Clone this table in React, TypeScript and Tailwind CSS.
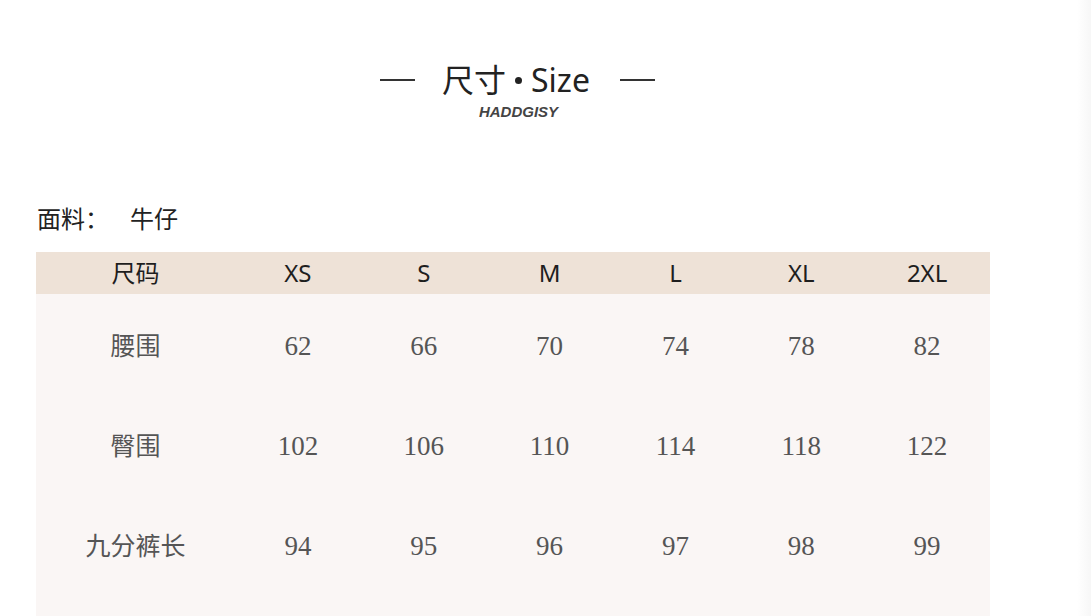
import React from 'react';

const sizes = ['XS', 'S', 'M', 'L', 'XL', '2XL'];

const rows = [
    { label: '腰围', values: ['62', '66', '70', '74', '78', '82'] },
    { label: '臀围', values: ['102', '106', '110', '114', '118', '122'] },
    { label: '九分裤长', values: ['94', '95', '96', '97', '98', '99'] },
];

const sans = "font-['Noto_Sans','Noto_Sans_CJK_SC',sans-serif]";

const App: React.FC = () => {
    return (
        <div className="flex w-full h-[616px] overflow-hidden bg-white">
            <div className="flex-1 flex flex-col">
                {/* Title */}
                <div className="flex flex-col items-center pt-[58px] pr-[42px]">
                    <div className={`flex items-center text-[32px] leading-[44px] text-[#222] ${sans}`}>
                        <div className="w-[35px] h-[2px] bg-[#333]" />
                        <span className="ml-[27px]">尺寸</span>
                        <span className="mx-[9px] w-[7px] h-[7px] rounded-full bg-[#222]" />
                        <span>Size</span>
                        <div className="ml-[30px] w-[35px] h-[2px] bg-[#333]" />
                    </div>
                    <div className="text-[15px] leading-[18px] font-bold italic text-[#444] font-['Liberation_Sans',sans-serif] mt-[1px] ml-[2px]">
                        HADDGISY
                    </div>
                </div>

                {/* Material */}
                <div className={`mt-[82px] ml-[37px] text-[24px] leading-[32px] text-[#222] ${sans}`}>
                    面料：<span className="ml-[21px]">牛仔</span>
                </div>

                {/* Table */}
                <div className="mt-[17px] ml-[36px] w-[954px] flex-1 bg-[#faf6f5]">
                    <div className={`grid grid-cols-[199px_repeat(6,1fr)] h-[42px] items-center bg-[#eee2d7] text-[24px] text-[#1e1e1e] ${sans}`}>
                        <div className="text-center">尺码</div>
                        {sizes.map((s) => (
                            <div key={s} className="text-center">{s}</div>
                        ))}
                    </div>
                    {rows.map((row) => (
                        <div key={row.label} className="grid grid-cols-[199px_repeat(6,1fr)] h-[100px] items-center pt-[4px]">
                            <div className={`text-center text-[25px] text-[#555] ${sans}`}>{row.label}</div>
                            {row.values.map((v, i) => (
                                <div key={i} className="text-center text-[27px] text-[#555] font-['Liberation_Serif',serif]">
                                    {v}
                                </div>
                            ))}
                        </div>
                    ))}
                </div>
            </div>
            <div className="w-[14px] bg-gradient-to-r from-white to-[#f7f7f7]" />
        </div>
    );
};

export default App;
